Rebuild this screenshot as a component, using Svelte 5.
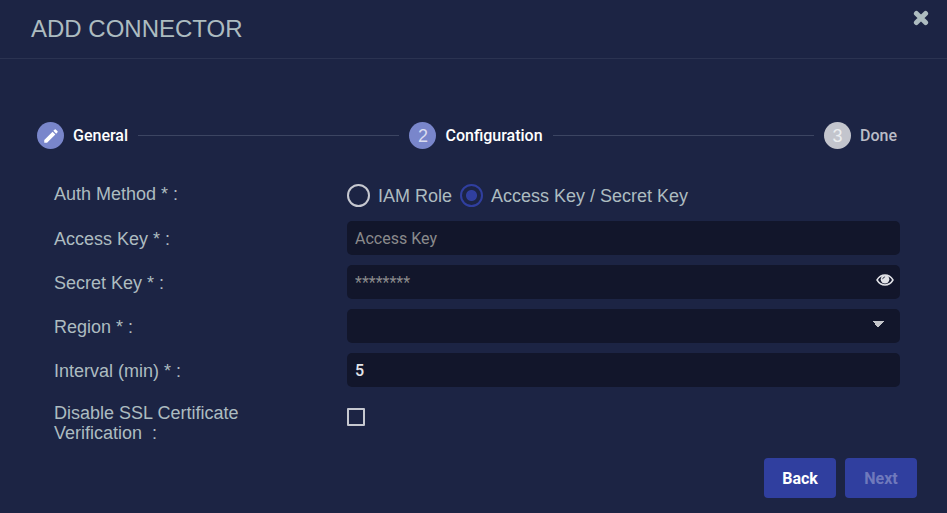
<script lang="ts">
    let authMethod = "keys";
    let accessKey = "";
    let secretKey = "";
    let region = "";
    let interval = "5";
    let disableSsl = false;
    let showSecret = false;
</script>

<div class="dialog">
    <header>
        <h1>ADD CONNECTOR</h1>
        <button class="close" type="button" aria-label="Close">
            <svg viewBox="0 0 16 16" width="16" height="16">
                <path d="M3.4 3.4 12.6 12.6M12.6 3.4 3.4 12.6" fill="none" stroke="currentColor" stroke-width="5" stroke-linecap="round" />
            </svg>
        </button>
    </header>

    <ol class="stepper">
        <li class="step">
            <span class="circle">
                <svg viewBox="0 0 24 24" width="18" height="18">
                    <path fill="#fff" d="M3 17.25V21h3.75L17.81 9.94l-3.75-3.75L3 17.25zM20.71 7.04a1 1 0 0 0 0-1.41l-2.34-2.34a1 1 0 0 0-1.41 0l-1.83 1.83 3.75 3.75 1.83-1.83z" />
                </svg>
            </span>
            <span>General</span>
        </li>
        <li class="line" aria-hidden="true"></li>
        <li class="step" aria-current="step">
            <span class="circle">2</span>
            <span>Configuration</span>
        </li>
        <li class="line" aria-hidden="true"></li>
        <li class="step pending">
            <span class="circle">3</span>
            <span>Done</span>
        </li>
    </ol>

    <form on:submit|preventDefault>
        <div class="row auth" role="radiogroup" aria-labelledby="auth-label">
            <span id="auth-label">Auth Method * :</span>
            <div class="radios">
                <label><input type="radio" name="auth" value="role" bind:group={authMethod} />IAM Role</label>
                <label><input type="radio" name="auth" value="keys" bind:group={authMethod} />Access Key / Secret Key</label>
            </div>
        </div>
        <div class="row">
            <label for="access-key">Access Key * :</label>
            <input class="field" id="access-key" type="text" placeholder="Access Key" bind:value={accessKey} />
        </div>
        <div class="row">
            <label for="secret-key">Secret Key * :</label>
            <div class="secret">
                <input class="field" id="secret-key" type={showSecret ? "text" : "password"} placeholder="********" bind:value={secretKey} />
                <button class="eye" type="button" aria-label="Show secret key" on:click={() => (showSecret = !showSecret)}>
                    <svg viewBox="0 0 18 12" width="18" height="12">
                        <path d="M1 6C3 2.7 5.8 1 9 1s6 1.7 8 5c-2 3.3-4.8 5-8 5S3 9.3 1 6z" fill="none" stroke="currentColor" stroke-width="1.5" stroke-linejoin="round" />
                        <circle cx="9" cy="5.2" r="4.3" fill="currentColor" />
                        <path d="M6.7 4.8Q7 3.2 8.7 2.9" fill="none" stroke="#12162b" stroke-width="0.8" stroke-linecap="round" />
                    </svg>
                </button>
            </div>
        </div>
        <div class="row">
            <label for="region">Region * :</label>
            <select class="field" id="region" bind:value={region}>
                <option value=""></option>
            </select>
        </div>
        <div class="row">
            <label for="interval">Interval (min) * :</label>
            <input class="field" id="interval" type="text" inputmode="numeric" bind:value={interval} />
        </div>
        <div class="row ssl">
            <label for="disable-ssl">Disable SSL Certificate Verification &nbsp;:</label>
            <input id="disable-ssl" type="checkbox" bind:checked={disableSsl} />
        </div>

        <div class="actions">
            <button type="button">Back</button>
            <button type="submit" disabled>Next</button>
        </div>
    </form>
</div>

<style>
    :global(body) {
        margin: 0;
        background-color: #1c2444;
    }

    .dialog {
        color: #adbcc0;
        font-family: "Liberation Sans", Arial, sans-serif;
        font-size: 18px;
        line-height: 20px;
    }

    header {
        display: flex;
        justify-content: space-between;
        align-items: flex-start;
        padding: 10px 18px 10px 31px;
        border-bottom: 1px solid #2b3351;
    }

    h1 {
        margin: 0;
        font-size: 24px;
        font-weight: 400;
        line-height: 38px;
    }

    button {
        border: none;
        cursor: pointer;
    }

    .close {
        display: flex;
        padding: 0;
        background: none;
        color: #adbcc0;
    }

    .stepper {
        display: flex;
        align-items: center;
        gap: 10px;
        margin: 63px 50px 0 37px;
        padding: 0;
        list-style: none;
        font-family: Roboto, sans-serif;
        font-size: 16px;
        font-weight: 500;
        color: #fff;
    }

    .step {
        display: flex;
        align-items: center;
        gap: 9px;
    }

    .circle {
        display: flex;
        justify-content: center;
        align-items: center;
        width: 27px;
        height: 27px;
        border-radius: 50%;
        background-color: #7986cb;
        color: #d9dcf0;
        font-family: "Liberation Sans", Arial, sans-serif;
        font-size: 18px;
        font-weight: 400;
    }

    .pending {
        color: #babcc6;
    }

    .pending .circle {
        background-color: #c3c5cd;
        color: #eceef0;
    }

    .line {
        flex: 1;
        height: 1px;
        background-color: #3c4562;
    }

    form {
        display: flex;
        flex-direction: column;
        gap: 10px;
        padding: 35px 47px 14px 54px;
    }

    .row {
        display: grid;
        grid-template-columns: 210px minmax(0, 1fr);
        column-gap: 83px;
        align-items: center;
    }

    .row > label {
        padding-top: 2px;
    }

    .auth {
        align-items: start;
        padding-bottom: 4px;
    }

    .radios {
        display: flex;
        gap: 8px;
    }

    .radios label {
        display: flex;
        align-items: center;
        gap: 8px;
    }

    input[type="radio"],
    input[type="checkbox"] {
        appearance: none;
        box-sizing: border-box;
        margin: 0;
        border: 2px solid #c6c8d0;
    }

    input[type="radio"] {
        width: 23px;
        height: 23px;
        border-radius: 50%;
    }

    input[type="radio"]:checked {
        border-color: #303f9f;
        background: radial-gradient(circle, #303f9f 5px, transparent 6px);
    }

    input[type="checkbox"] {
        width: 18px;
        height: 18px;
        border-radius: 1px;
    }

    input[type="checkbox"]:checked {
        background-color: #303f9f;
    }

    .field {
        box-sizing: border-box;
        width: 100%;
        height: 34px;
        padding: 0 8px;
        border: none;
        border-radius: 5px;
        background-color: #12162b;
        color: #e4e5ea;
        font-family: Roboto, sans-serif;
        font-size: 16px;
        font-weight: 500;
    }

    .field::placeholder {
        color: #8a8a8c;
        font-weight: 400;
        opacity: 1;
    }

    .secret {
        display: grid;
        align-items: center;
    }

    .secret .field,
    .eye {
        grid-area: 1 / 1;
    }

    .eye {
        display: flex;
        justify-self: end;
        padding: 0 6px 4px;
        background: none;
        color: #e1e2e6;
    }

    select.field {
        appearance: none;
        background-image: conic-gradient(from -45deg at 50% 100%, #c4c5ca 90deg, transparent 0);
        background-repeat: no-repeat;
        background-position: right 16px top 12px;
        background-size: 12px 6px;
    }

    .ssl {
        align-items: start;
        margin-top: 4px;
    }

    .ssl input {
        margin-top: 7px;
    }

    .actions {
        display: flex;
        justify-content: flex-end;
        gap: 9px;
        margin-top: 5px;
        margin-right: -17px;
    }

    .actions button {
        width: 72px;
        height: 40px;
        padding: 0;
        border-radius: 4px;
        background-color: #303f9f;
        color: #fff;
        font-family: Roboto, sans-serif;
        font-size: 16px;
        font-weight: 700;
    }

    .actions button:disabled {
        color: #6f79bc;
        cursor: default;
    }
</style>
